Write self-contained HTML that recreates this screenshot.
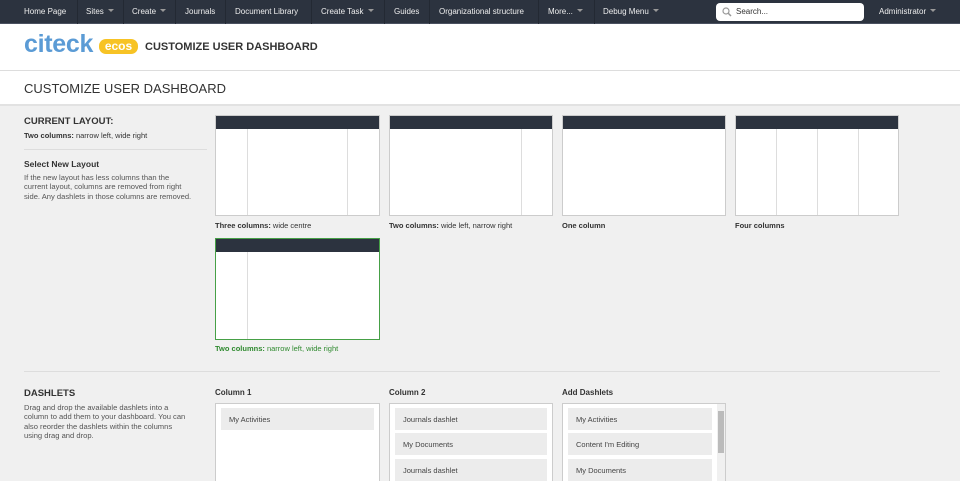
<!DOCTYPE html>
<html><head><meta charset="utf-8"><style>
*{margin:0;padding:0;box-sizing:border-box}
html,body{width:960px;height:481px;overflow:hidden}
body{background:#f0f0f0;font-family:"Liberation Sans",sans-serif;color:#333;position:relative}
.a{position:absolute;white-space:nowrap}
.nav{position:absolute;left:0;top:0;width:960px;height:24px;background:#2c333f;border-bottom:1px solid #4a5160}
.nav .a{color:#eee;font-size:8px;top:7px}
.sep{position:absolute;top:0;width:1px;height:24px;background:#232933}
.car{display:inline-block;border-left:3px solid transparent;border-right:3px solid transparent;border-top:3px solid #999;margin-left:4px;vertical-align:2px}
.hdr{position:absolute;left:0;top:24px;width:960px;height:47px;background:#fff;border-bottom:1px solid #ddd}
.ttl{position:absolute;left:0;top:71px;width:960px;height:35px;background:#fff;border-bottom:2px solid #e2e2e2}
.lay{position:absolute;background:#fff;border:1px solid #ccc;overflow:hidden}
.lay .h{position:absolute;left:0;top:0;right:0;height:13px;background:#2c333f}
.lay .v{position:absolute;top:13px;bottom:0;width:1px;background:#ddd}
.lbl{font-size:7.5px;color:#333}
.col{position:absolute;background:#fff;border:1px solid #ccc;top:403px;height:78px;border-bottom:none}
.it{position:absolute;left:5px;right:5px;height:22px;background:#ececec;font-size:7.5px;color:#444;padding:7px 0 0 8px}
</style></head><body>
<div class="nav">
<div class="a" style="left:24px">Home Page</div><div class="sep" style="left:77px"></div>
<div class="a" style="left:86px">Sites<span class="car"></span></div><div class="sep" style="left:123px"></div>
<div class="a" style="left:132px">Create<span class="car"></span></div><div class="sep" style="left:175px"></div>
<div class="a" style="left:185px">Journals</div><div class="sep" style="left:225px"></div>
<div class="a" style="left:235px">Document Library</div><div class="sep" style="left:311px"></div>
<div class="a" style="left:321px">Create Task<span class="car"></span></div><div class="sep" style="left:384px"></div>
<div class="a" style="left:394px">Guides</div><div class="sep" style="left:429px"></div>
<div class="a" style="left:439px">Organizational structure</div><div class="sep" style="left:538px"></div>
<div class="a" style="left:548px">More...<span class="car"></span></div><div class="sep" style="left:594px"></div>
<div class="a" style="left:603px">Debug Menu<span class="car"></span></div>
<div style="position:absolute;left:716px;top:3px;width:148px;height:18px;background:#fff;border-radius:4px"></div>
<svg class="a" style="left:722px;top:7px" width="10" height="10"><circle cx="4" cy="4" r="3" fill="none" stroke="#999" stroke-width="1.2"/><path d="M6 6l3 3" stroke="#999" stroke-width="1.5"/></svg>
<div class="a" style="left:736px;color:#333">Search...</div>
<div class="a" style="left:879px">Administrator<span class="car"></span></div>
</div>
<div class="hdr">
<div class="a" style="left:24px;top:5px;font-size:25px;font-weight:bold;color:#5b9bd5;line-height:30px;letter-spacing:-0.3px">citeck</div>
<div class="a" style="left:99px;top:15px;width:39px;height:15px;background:#f7c325;border-radius:7px;color:#fff;font-size:12px;font-weight:bold;text-align:center;line-height:15px">ecos</div>
<div class="a" style="left:145px;top:17px;font-size:11px;font-weight:bold;color:#333">CUSTOMIZE USER DASHBOARD</div>
</div>
<div class="ttl"><div class="a" style="left:24px;top:10px;font-size:13px;color:#333">CUSTOMIZE USER DASHBOARD</div></div>

<div class="a" style="left:24px;top:116px;font-size:9.5px;font-weight:bold">CURRENT LAYOUT:</div>
<div class="a lbl" style="left:24px;top:131px"><b>Two columns:</b> narrow left, wide right</div>
<div style="position:absolute;left:24px;top:149px;width:183px;height:1px;background:#ddd"></div>
<div class="a" style="left:24px;top:159px;font-size:8.5px;font-weight:bold">Select New Layout</div>
<div class="a lbl" style="left:24px;top:173px;line-height:9.3px;color:#555;font-size:7.6px">If the new layout has less columns than the<br>current layout, columns are removed from right<br>side. Any dashlets in those columns are removed.</div>

<div class="lay" style="left:215px;top:115px;width:165px;height:101px"><div class="h"></div><div class="v" style="left:31px"></div><div class="v" style="left:131px"></div></div>
<div class="lay" style="left:389px;top:115px;width:164px;height:101px"><div class="h"></div><div class="v" style="left:131px"></div></div>
<div class="lay" style="left:562px;top:115px;width:164px;height:101px"><div class="h"></div></div>
<div class="lay" style="left:735px;top:115px;width:164px;height:101px"><div class="h"></div><div class="v" style="left:40px"></div><div class="v" style="left:81px"></div><div class="v" style="left:122px"></div></div>
<div class="a lbl" style="left:215px;top:221px"><b>Three columns:</b> wide centre</div>
<div class="a lbl" style="left:389px;top:221px"><b>Two columns:</b> wide left, narrow right</div>
<div class="a lbl" style="left:562px;top:221px"><b>One column</b></div>
<div class="a lbl" style="left:735px;top:221px"><b>Four columns</b></div>
<div class="lay" style="left:215px;top:238px;width:165px;height:102px;border:1px solid #46a046"><div class="h"></div><div class="v" style="left:31px"></div></div>
<div class="a lbl" style="left:215px;top:344px;color:#2f8a2f"><b>Two columns:</b> narrow left, wide right</div>

<div style="position:absolute;left:24px;top:371px;width:916px;height:1px;background:#ddd"></div>
<div class="a" style="left:24px;top:388px;font-size:9.5px;font-weight:bold">DASHLETS</div>
<div class="a lbl" style="left:24px;top:403px;line-height:9.3px;color:#555;font-size:7.6px">Drag and drop the available dashlets into a<br>column to add them to your dashboard. You can<br>also reorder the dashlets within the columns<br>using drag and drop.</div>
<div class="a" style="left:215px;top:388px;font-size:8px;font-weight:bold">Column 1</div>
<div class="a" style="left:389px;top:388px;font-size:8px;font-weight:bold">Column 2</div>
<div class="a" style="left:562px;top:388px;font-size:8px;font-weight:bold">Add Dashlets</div>
<div class="col" style="left:215px;width:165px"><div class="it" style="top:4px">My Activities</div></div>
<div class="col" style="left:389px;width:164px"><div class="it" style="top:4px">Journals dashlet</div><div class="it" style="top:29px">My Documents</div><div class="it" style="top:55px">Journals dashlet</div></div>
<div class="col" style="left:562px;width:164px"><div class="it" style="top:4px;right:13px">My Activities</div><div class="it" style="top:29px;right:13px">Content I'm Editing</div><div class="it" style="top:55px;right:13px">My Documents</div>
<div style="position:absolute;right:0;top:0;width:8px;height:78px;background:#f0f0f0"></div><div style="position:absolute;right:1px;top:7px;width:6px;height:42px;background:#bbb"></div></div>
</body></html>
